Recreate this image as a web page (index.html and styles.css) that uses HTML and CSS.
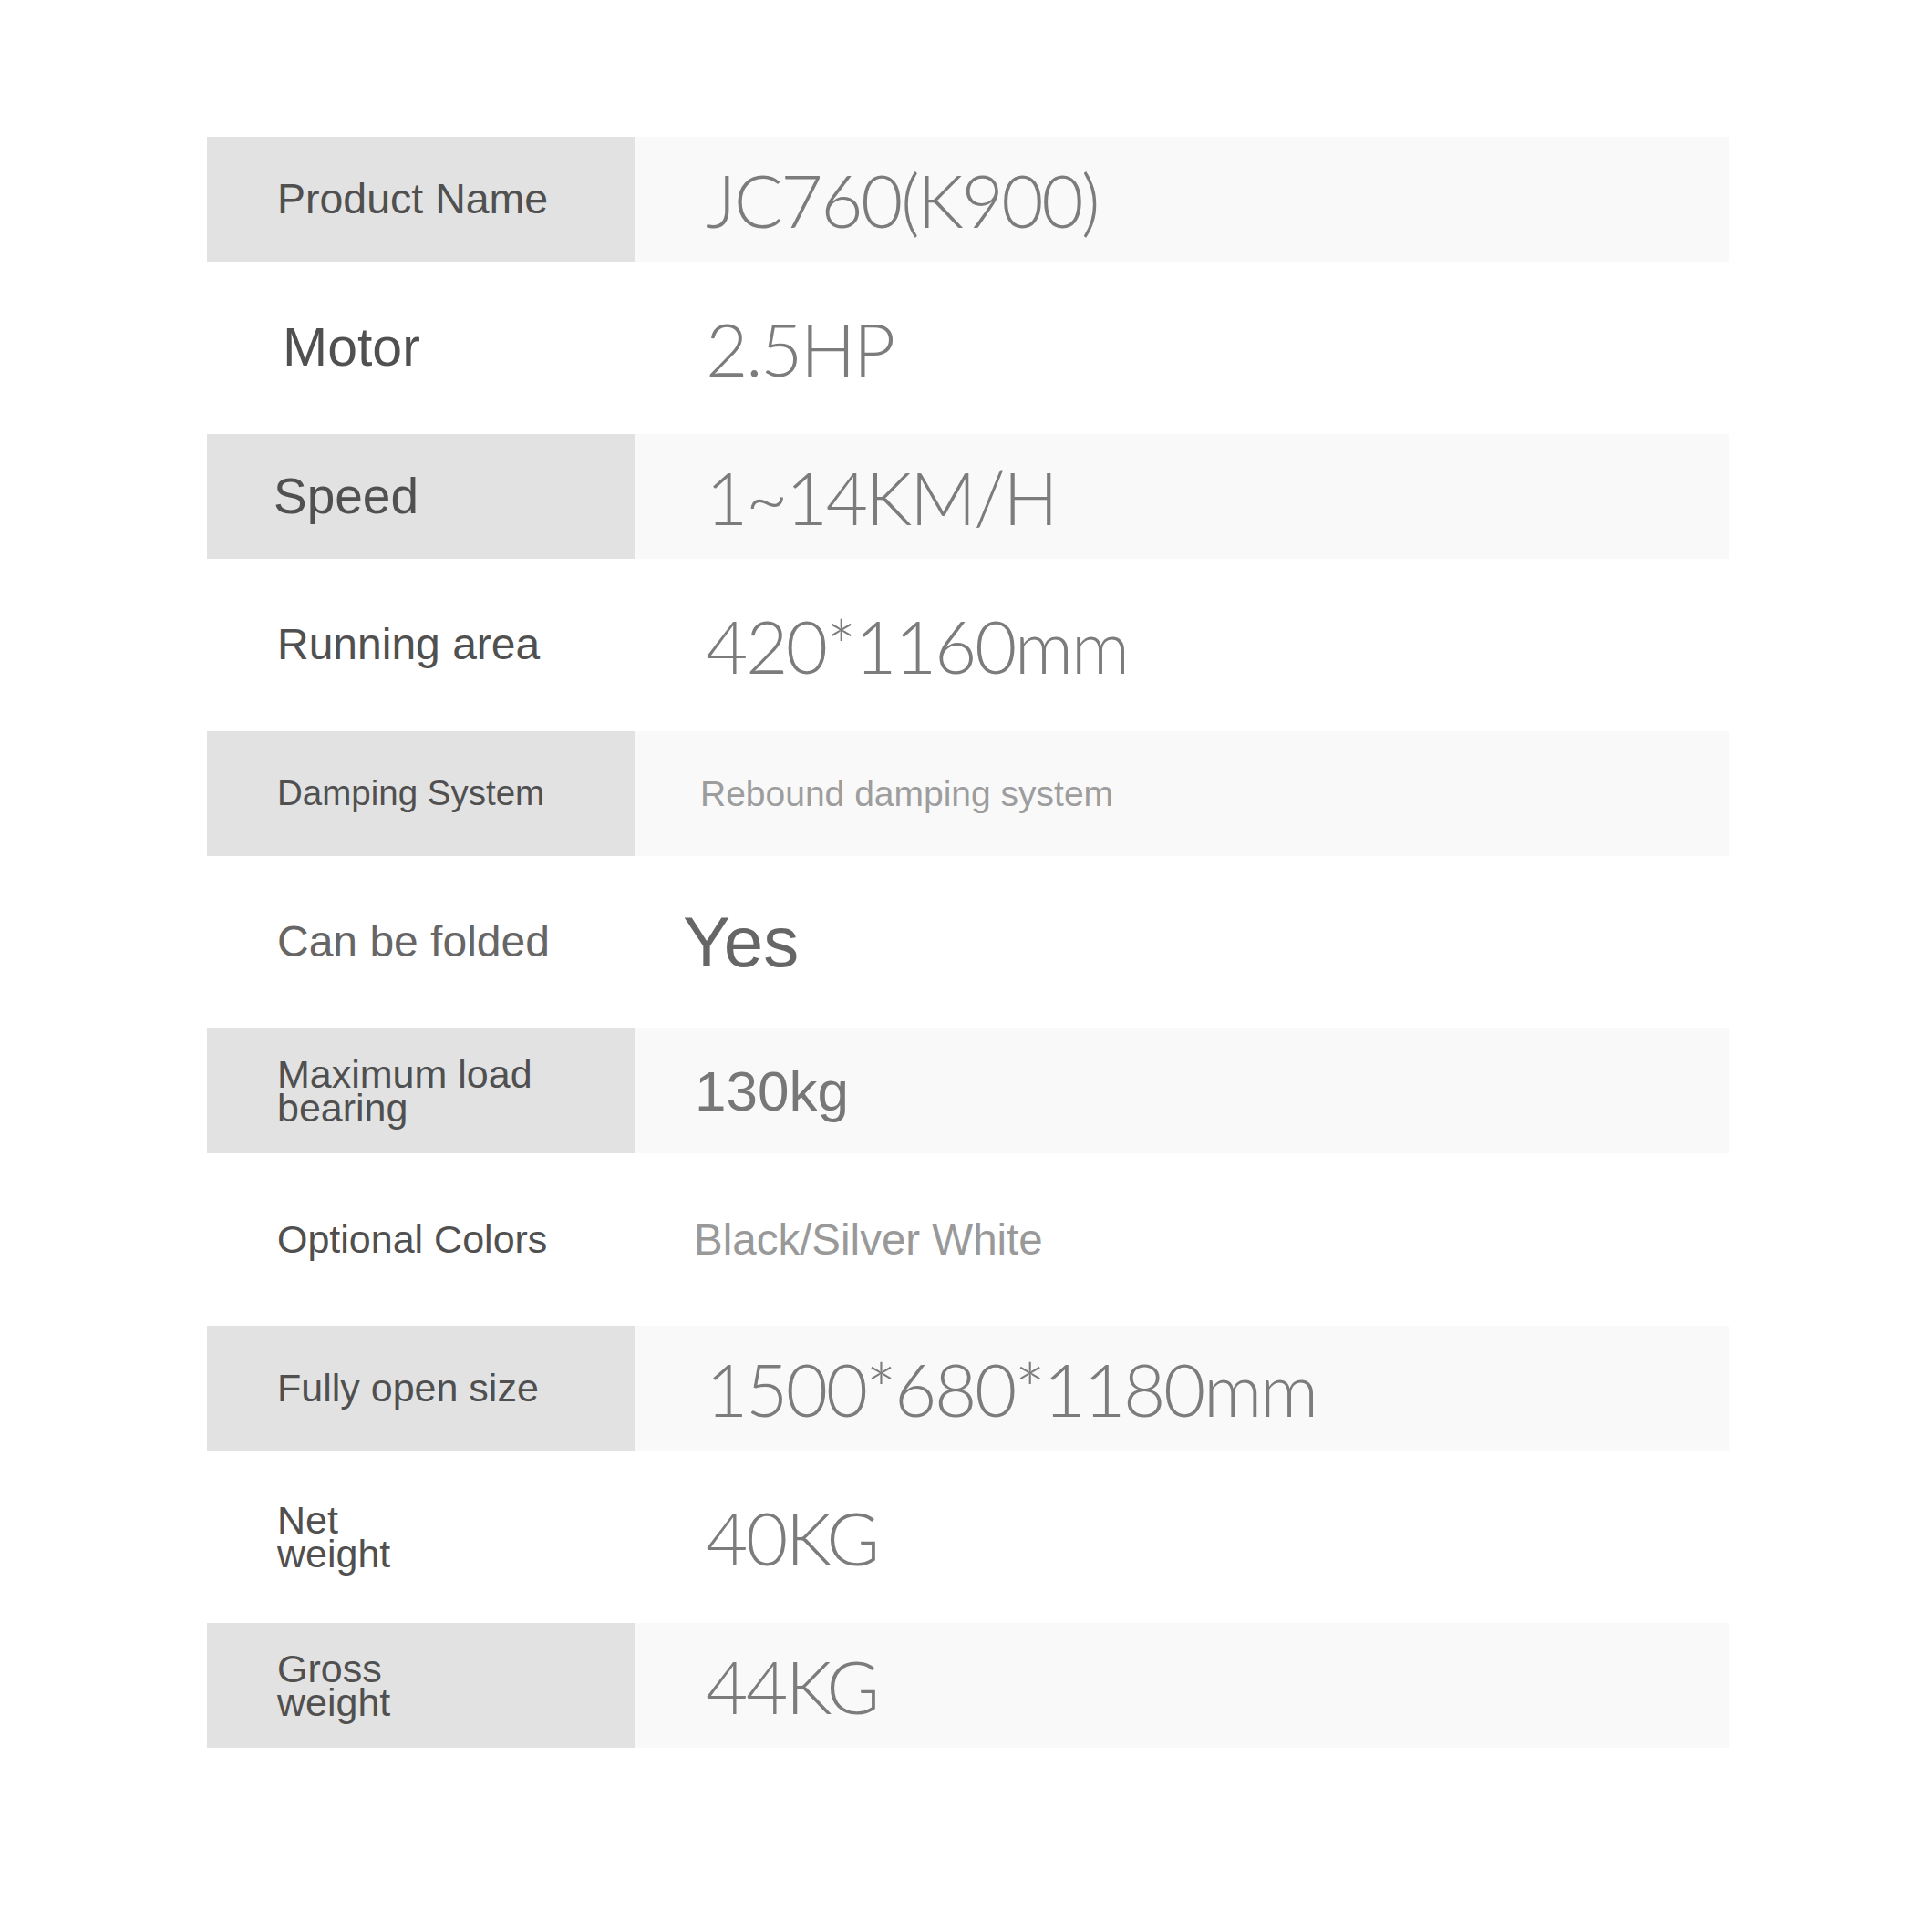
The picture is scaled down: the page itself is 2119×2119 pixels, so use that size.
FILE: index.html
```html
<!DOCTYPE html>
<html lang="en">
<head>
  <meta charset="UTF-8" />
  <title>JC760 Specifications</title>
  <link rel="stylesheet" href="styles.css">
</head>
<body>
  <div class="specs">
    <div class="row shaded">
      <div class="label">Product Name</div>
      <div class="value thin">JC760(K900)</div>
    </div>
    <div class="row">
      <div class="label large motor">Motor</div>
      <div class="value thin">2.5HP</div>
    </div>
    <div class="row shaded">
      <div class="label large speed">Speed</div>
      <div class="value thin">1~14KM/H</div>
    </div>
    <div class="row">
      <div class="label running">Running area</div>
      <div class="value thin">420*1160mm</div>
    </div>
    <div class="row shaded">
      <div class="label tiny">Damping System</div>
      <div class="value note">Rebound damping system</div>
    </div>
    <div class="row">
      <div class="label faded">Can be folded</div>
      <div class="value big">Yes</div>
    </div>
    <div class="row shaded">
      <div class="label small">Maximum load<br>bearing</div>
      <div class="value mid">130kg</div>
    </div>
    <div class="row">
      <div class="label small">Optional Colors</div>
      <div class="value soft">Black/Silver White</div>
    </div>
    <div class="row shaded">
      <div class="label small">Fully open size</div>
      <div class="value thin">1500*680*1180mm</div>
    </div>
    <div class="row">
      <div class="label small">Net<br>weight</div>
      <div class="value thin">40KG</div>
    </div>
    <div class="row shaded">
      <div class="label small">Gross<br>weight</div>
      <div class="value thin">44KG</div>
    </div>
  </div>
</body>
</html>
```

FILE: styles.css
```css
body {
  margin: 0;
  background: #fff;
  font-family: 'Liberation Sans', Arial, sans-serif;
}

.specs {
  width: 1669px;
  margin: 150px 0 0 227px;
}

.row {
  display: grid;
  grid-template-columns: 469px 1fr;
  height: 189px;
}

.row.shaded {
  height: 137px;
}

.row.shaded .label {
  background: #e2e2e2;
}

.row.shaded .value {
  background: #f9f9fa;
}

.label,
.value {
  display: flex;
  align-items: center;
  white-space: nowrap;
}

.label {
  padding-left: 77px;
  font-size: 46.5px;
  line-height: 0.85;
  color: #505050;
}

.label.large {
  font-size: 59px;
}

.label.motor {
  padding-left: 83px;
}

.label.speed {
  padding-left: 73px;
  font-size: 55px;
}

.label.running {
  font-size: 48px;
}

/* the sheet packs wrapped labels tightly */
.label.small {
  font-size: 43px;
}

.label.tiny {
  font-size: 38.5px;
}

.label.faded {
  color: #666;
  font-size: 48px;
}

.value {
  padding-left: 78px;
  color: #7c7c7c;
}

.value.thin {
  font-family: Lato, Roboto, sans-serif;
  font-weight: 300;
  font-size: 80px;
  letter-spacing: -2.5px;
}

.value.note {
  padding-left: 72px;
  font-size: 39px;
  color: #9d9d9d;
}

.value.big {
  padding-left: 53px;
  font-size: 78px;
  color: #666;
}

.value.mid {
  padding-left: 66px;
  font-size: 62px;
  color: #777;
}

.value.soft {
  padding-left: 65px;
  font-size: 47.5px;
  color: #999;
}
```
